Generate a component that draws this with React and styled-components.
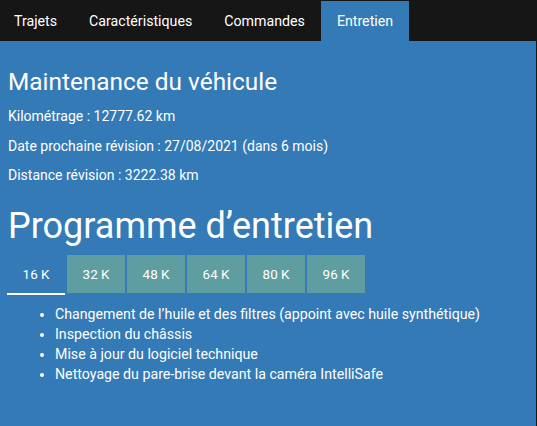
import React, { useState } from "react";
import styled, { createGlobalStyle } from "styled-components";

const GlobalStyle = createGlobalStyle`
  html, body {
    margin: 0;
    padding: 0;
    background-color: #161616;
    font-family: Roboto, "Liberation Sans", sans-serif;
  }
`;

const Root = styled.div`
  width: 536px;
  height: 426px;
  display: flex;
  flex-direction: column;
  background-color: #161616;
`;

const TopNav = styled.ul`
  list-style: none;
  margin: 0 0 0 -2px;
  padding: 1px 0 0 0;
  display: flex;
  height: 40px;
`;

const NavTab = styled.li`
  padding: 0 16px;
  display: flex;
  align-items: center;
  font-size: 14.2px;
  color: #fff;
  cursor: pointer;
  background-color: ${(p) => (p.active ? "#337ab7" : "transparent")};
`;

const Content = styled.div`
  flex: 1;
  background-color: #337ab7;
  color: #fff;
  padding: 0 8px;
`;

const Title = styled.h2`
  margin: 0;
  padding-top: 26px;
  font-size: 24.4px;
  font-weight: 400;
  line-height: 30px;
`;

const Info = styled.p`
  margin: 0;
  font-size: 14px;
  line-height: 20px;
  padding-top: ${(p) => (p.first ? "9px" : "9.5px")};
`;

const SubTitle = styled.h1`
  margin: 0;
  padding-top: 21px;
  font-size: 36px;
  font-weight: 400;
  line-height: 40px;
`;

const Pills = styled.div`
  display: flex;
  gap: 2px;
  margin-top: 9px;
  margin-left: -1px;
`;

const Pill = styled.button`
  width: 58px;
  height: ${(p) => (p.active ? "40px" : "38px")};
  border: none;
  padding: 0;
  box-sizing: border-box;
  font-family: inherit;
  font-size: 13.4px;
  color: #fff;
  cursor: pointer;
  background-color: ${(p) => (p.active ? "transparent" : "#5f9ea0")};
  border-bottom: ${(p) => (p.active ? "2px solid #fff" : "none")};
`;

const TaskList = styled.ul`
  margin: 9px 0 0 0;
  padding-left: 47px;
  font-size: 14.2px;
  line-height: 20px;
`;

const Task = styled.li``;

const tabs = ["Trajets", "Caractéristiques", "Commandes", "Entretien"];
const steps = ["16 K", "32 K", "48 K", "64 K", "80 K", "96 K"];
const tasks = [
  "Changement de l’huile et des filtres (appoint avec huile synthétique)",
  "Inspection du châssis",
  "Mise à jour du logiciel technique",
  "Nettoyage du pare-brise devant la caméra IntelliSafe",
];

export default function App() {
  const [step, setStep] = useState(0);
  return (
    <Root>
      <GlobalStyle />
      <TopNav>
        {tabs.map((t) => (
          <NavTab key={t} active={t === "Entretien"}>
            {t}
          </NavTab>
        ))}
      </TopNav>
      <Content>
        <Title>Maintenance du véhicule</Title>
        <Info first>Kilométrage : 12777.62 km</Info>
        <Info>Date prochaine révision : 27/08/2021 (dans 6 mois)</Info>
        <Info>Distance révision : 3222.38 km</Info>
        <SubTitle>Programme d’entretien</SubTitle>
        <Pills>
          {steps.map((s, i) => (
            <Pill key={s} active={i === step} onClick={() => setStep(i)}>
              {s}
            </Pill>
          ))}
        </Pills>
        <TaskList>
          {tasks.map((t) => (
            <Task key={t}>{t}</Task>
          ))}
        </TaskList>
      </Content>
    </Root>
  );
}
